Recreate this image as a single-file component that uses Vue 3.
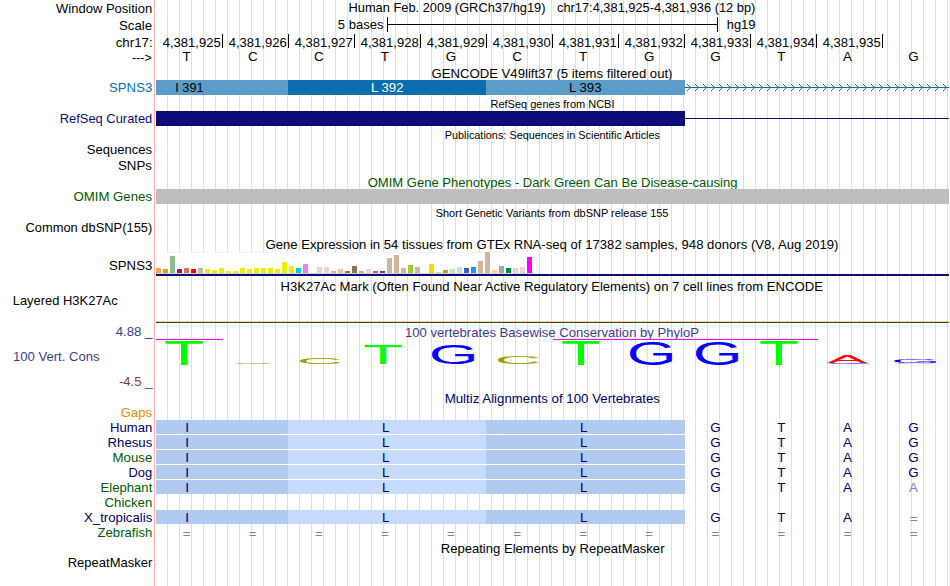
<script setup>
// Every track is its own svg strip, stacked top to bottom.
// The viewBox keeps the strips in one shared browser coordinate system.
const bases = "TCCTGCTGGTAG".split("");
const baseX = (i) => 186.7 + 66.08 * i;

// stretch the glyphs together with the spacing
const fit = (x, end) => ({ x, textLength: end - x, lengthAdjust: "spacingAndGlyphs" });

const ticks = Array.from({ length: 11 }, (_, i) => ({
  x: 222 + 66 * i,
  text: "4,381," + (925 + i),
}));

const arrows = Array.from({ length: 33 }, (_, i) => 687 + 8 * i)
  .map((x) => `M${x} 84h1v1h1v1h1v1h1v1h-1v1h-1v1h-1v1h-1v-1h1v-1h1v-1h1v-1h-1v-1h-1v-1h-1z`)
  .join("");

const codons = [
  { x: 156, width: 132, fill: "#5c9cc8", text: "I 391", from: 175.3, to: 203.5, color: "#000" },
  { x: 288, width: 198, fill: "#0c6eae", text: "L 392", from: 371, to: 403.5, color: "#fff" },
  { x: 486, width: 199, fill: "#5c9cc8", text: "L 393", from: 569, to: 601.5, color: "#000" },
];

// one [color, height] pair per GTEx tissue
const tissues = [
  ["#ffa54f", 5], ["#ee9a00", 4], ["#8fbc8f", 17], ["#8b1c62", 4], ["#ee6a50", 5], ["#ff0000", 4],
  ["#cdb79e", 5], ["#eeee00", 4], ["#eeee00", 3], ["#eeee00", 5], ["#eeee00", 2], ["#eeee00", 2],
  ["#eeee00", 5], ["#eeee00", 4], ["#eeee00", 5], ["#eeee00", 5], ["#eeee00", 5], ["#eeee00", 4],
  ["#eeee00", 11], ["#eeee00", 7], ["#00cdcd", 5], ["#ee82ee", 9], ["#ffffff", 1], ["#eed5d2", 6],
  ["#eed5d2", 6], ["#cdb79e", 2], ["#eec591", 4], ["#8b7355", 2], ["#8b7355", 7], ["#cdaa7d", 2],
  ["#eed5d2", 4], ["#b452cd", 2], ["#7a378b", 2], ["#cdb79e", 15], ["#cdb79e", 18], ["#cdb79e", 5],
  ["#9acd32", 8], ["#cdb79e", 6], ["#ffffff", 1], ["#ffd700", 9], ["#ffb6c1", 1], ["#cd9b1d", 3],
  ["#b4eeb4", 4], ["#d9d9d9", 6], ["#3a5fcd", 5], ["#1e90ff", 6], ["#cdb79e", 12], ["#cdb79e", 21],
  ["#ffd39b", 3], ["#a6a6a6", 7], ["#008b45", 5], ["#eed5d2", 5], ["#eed5d2", 6], ["#ff00ff", 16],
];

// ink boxes of the letters at font-size 100: left, width, descent, height
const ink = {
  T: [2.05, 56.9, 0, 68.8],
  C: [5, 64, 1, 70.8],
  G: [5, 67, 1, 70.8],
  A: [0.2, 66.3, 0, 68.8],
};
const colors = { T: "#00ff00", C: "#a0a000", G: "#0000ff", A: "#ff0000" };
const logo = [
  ["T", 165.3, 202.7, 340.8, 365],
  ["C", 235, 274, 362.2, 363.8],
  ["C", 300, 341, 357, 364],
  ["T", 364.3, 401.7, 345, 364],
  ["G", 432, 475, 345, 364],
  ["C", 498, 539, 356, 364],
  ["T", 562.3, 599.6, 340.8, 365],
  ["G", 630, 673, 341, 365],
  ["G", 696, 739, 341, 365],
  ["T", 760, 797.5, 340.8, 365],
  ["G", 828, 871, 363, 364],
  ["A", 827.3, 867, 355, 363],
  ["A", 894, 934, 363, 364],
  ["G", 894, 937, 359, 363],
].map(([letter, x1, x2, y1, y2]) => {
  const [left, width, descent, height] = ink[letter];
  const sx = (x2 - x1) / width;
  const sy = (y2 - y1) / height;
  return {
    letter,
    fill: colors[letter],
    transform: `translate(${x1 - left * sx} ${y2 - descent * sy}) scale(${sx} ${sy})`,
  };
});

const species = [
  { name: "Human", x: 110, green: false, tail: "GTAG", gap: true },
  { name: "Rhesus", x: 107.5, green: false, tail: "GTAG", gap: true },
  { name: "Mouse", x: 112.5, green: true, tail: "GTAG", gap: true },
  { name: "Dog", x: 128.5, green: false, tail: "GTAG", gap: true },
  { name: "Elephant", x: 100.5, green: true, tail: "GTAa" },
  { name: "Chicken", x: 104.5, green: true, tail: "" },
  { name: "X_tropicalis", x: 84, green: false, tail: "GTA=" },
  { name: "Zebrafish", x: 97.5, green: true, tail: "====", unaligned: true },
];
const isFaint = (c) => c === "=" || c === "a";
</script>

<template>
  <main class="browser">
    <svg height="16" viewBox="0 0 950 16">
      <text v-bind="fit(56, 152.2)" y="13">Window Position</text>
      <text v-bind="fit(348.5, 545.5)" y="12">Human Feb. 2009 (GRCh37/hg19)</text>
      <text v-bind="fit(557, 755.3)" y="12">chr17:4,381,925-4,381,936 (12 bp)</text>
    </svg>

    <svg height="17" viewBox="0 16 950 17">
      <text v-bind="fit(119, 152.2)" y="30">Scale</text>
      <text v-bind="fit(337.8, 383.5)" y="29">5 bases</text>
      <path class="ruler" d="M387.5 17v15M387 24.5h331M717.5 17v15" />
      <text v-bind="fit(726.7, 755.5)" y="29">hg19</text>
    </svg>

    <svg height="16" viewBox="0 33 950 16">
      <text v-bind="fit(115.7, 152.7)" y="47">chr17:</text>
      <template v-for="tick in ticks" :key="tick.x">
        <text v-bind="fit(tick.x - 59.3, tick.x - 1.3)" y="47">{{ tick.text }}</text>
        <rect :x="tick.x" y="34" width="1" height="14" />
      </template>
    </svg>

    <svg height="17" viewBox="0 49 950 17">
      <text v-bind="fit(132, 151.7)" y="62">---&gt;</text>
      <text v-for="(base, i) in bases" :key="i" class="mid" :x="baseX(i)" y="61">{{ base }}</text>
    </svg>

    <svg height="29" viewBox="0 66 950 29">
      <text v-bind="fit(431.5, 672.5)" y="78">GENCODE V49lift37 (5 items filtered out)</text>
      <text class="gencode" v-bind="fit(109, 152.3)" y="92">SPNS3</text>
      <template v-for="codon in codons" :key="codon.x">
        <rect :x="codon.x" y="80" :width="codon.width" height="15" :fill="codon.fill" />
        <text v-bind="fit(codon.from, codon.to)" y="92" :fill="codon.color">{{ codon.text }}</text>
      </template>
      <rect class="gencode" x="685" y="87" width="264" height="1" />
      <path class="arrows" :d="arrows" />
    </svg>

    <svg height="31" viewBox="0 95 950 31">
      <text class="small" v-bind="fit(490.5, 614.5)" y="108">RefSeq genes from NCBI</text>
      <text class="refseq" v-bind="fit(59.7, 152.3)" y="123">RefSeq Curated</text>
      <rect class="refseq" x="156" y="111" width="529" height="15" />
      <rect class="refseq" x="685" y="118" width="264" height="1" />
    </svg>

    <svg height="47" viewBox="0 126 950 47">
      <text class="small" v-bind="fit(444.7, 660)" y="139">Publications: Sequences in Scientific Articles</text>
      <text v-bind="fit(86.7, 152)" y="154">Sequences</text>
      <text v-bind="fit(118, 152)" y="170">SNPs</text>
    </svg>

    <svg height="31" viewBox="0 173 950 31">
      <text class="omim" v-bind="fit(367.7, 737.5)" y="187">OMIM Gene Phenotypes - Dark Green Can Be Disease-causing</text>
      <text class="omim" v-bind="fit(73.5, 152)" y="201">OMIM Genes</text>
      <rect class="omim-bar" x="156" y="189" width="793" height="15" />
    </svg>

    <svg height="32" viewBox="0 204 950 32">
      <text class="small" v-bind="fit(435.7, 668.5)" y="217">Short Genetic Variants from dbSNP release 155</text>
      <text v-bind="fit(25.5, 152.3)" y="232">Common dbSNP(155)</text>
    </svg>

    <svg height="40" viewBox="0 236 950 40">
      <text v-bind="fit(265.5, 838.5)" y="249">Gene Expression in 54 tissues from GTEx RNA-seq of 17382 samples, 948 donors (V8, Aug 2019)</text>
      <text v-bind="fit(109, 152.3)" y="270">SPNS3</text>
      <rect class="gtex-box" x="156.5" y="252.5" width="377" height="21" />
      <rect class="gtex-base" x="156" y="273" width="378" height="1" />
      <rect
        v-for="([color, height], i) in tissues"
        :key="i"
        :x="156 + 7 * i"
        :y="273 - height"
        width="5"
        :height="height"
        :fill="color"
      />
      <rect class="refseq" x="156" y="274" width="793" height="2" />
    </svg>

    <svg height="48" viewBox="0 276 950 48">
      <text v-bind="fit(280.5, 823)" y="291">H3K27Ac Mark (Often Found Near Active Regulatory Elements) on 7 cell lines from ENCODE</text>
      <text v-bind="fit(12.7, 117.7)" y="305">Layered H3K27Ac</text>
      <rect class="mark-top" x="156" y="321" width="793" height="1" />
      <rect class="mark" x="156" y="322" width="793" height="1" />
    </svg>

    <svg height="66" viewBox="0 324 950 66">
      <g class="cons">
        <text v-bind="fit(405, 699)" y="337">100 vertebrates Basewise Conservation by PhyloP</text>
        <text v-bind="fit(115.7, 141.5)" y="336">4.88</text>
        <text x="145" y="336">_</text>
        <text v-bind="fit(13, 99.5)" y="361">100 Vert. Cons</text>
      </g>
      <g class="cons-min">
        <text v-bind="fit(119, 141.5)" y="386">-4.5</text>
        <text x="145" y="386">_</text>
      </g>
      <path class="clipped" d="M156 339.5h67M553 339.5h265" />
      <text
        v-for="(item, i) in logo"
        :key="i"
        class="logo"
        :fill="item.fill"
        :transform="item.transform"
      >{{ item.letter }}</text>
    </svg>

    <svg height="30" viewBox="0 390 950 30">
      <text class="multiz" v-bind="fit(444.7, 660)" y="403">Multiz Alignments of 100 Vertebrates</text>
      <text class="gaps" v-bind="fit(120.7, 152)" y="417">Gaps</text>
    </svg>

    <svg v-for="row in species" :key="row.name" height="15" viewBox="0 0 950 15">
      <text :class="row.green ? 'omim' : 'multiz'" v-bind="fit(row.x, 152.3)" y="12">{{ row.name }}</text>
      <template v-if="row.tail && !row.unaligned">
        <rect v-if="row.gap" class="divider" x="156" y="14" width="529" height="1" />
        <rect class="codon-odd" x="156" y="0" width="132" height="14" />
        <rect class="codon-even" x="288" y="0" width="198" height="14" />
        <rect class="codon-odd" x="486" y="0" width="199" height="14" />
        <text class="multiz mid" x="187" y="12">I</text>
        <text class="multiz mid" x="385.7" y="12">L</text>
        <text class="multiz mid" x="583.7" y="12">L</text>
      </template>
      <template v-if="row.unaligned">
        <text v-for="i in 8" :key="i" class="faint mid" :x="baseX(i - 1)" y="13">=</text>
      </template>
      <text
        v-for="(c, i) in row.tail"
        :key="'t' + i"
        class="mid"
        :class="isFaint(c) ? 'faint' : 'multiz'"
        :x="baseX(8 + i)"
        :y="c === '=' ? 13 : 12"
      >{{ c.toUpperCase() }}</text>
    </svg>

    <svg height="46" viewBox="0 540 950 46">
      <text v-bind="fit(440.7, 664.5)" y="553">Repeating Elements by RepeatMasker</text>
      <text v-bind="fit(67.7, 152.3)" y="567">RepeatMasker</text>
    </svg>
  </main>
</template>

<style>
body {
  background: #fff;
}
</style>

<style scoped>
.browser {
  display: flex;
  flex-direction: column;
  width: 950px;
  height: 586px;
  overflow: hidden;
  /* red label border, then a guide line every 12 pixels */
  background-image: linear-gradient(#ffb0b0, #ffb0b0),
    repeating-linear-gradient(
      to right,
      transparent 0,
      transparent 11px,
      #dcdcf5 11px,
      #dcdcf5 12px
    );
  background-size: 1px 100%, 794px 100%;
  background-position: 154px 0, 156px 0;
  background-repeat: no-repeat;
}

svg {
  display: block;
  flex: none;
  width: 950px;
  overflow: visible;
}

text {
  font-family: "Liberation Sans", Arial, Helvetica, sans-serif;
  font-size: 13.6px;
  white-space: pre;
}

.small {
  font-size: 11.4px;
}

.mid {
  font-size: 13.4px;
  text-anchor: middle;
}

.logo {
  font-size: 100px;
}

.ruler {
  fill: none;
  stroke: #000;
}

.gencode {
  fill: #0c6eae;
}

.arrows {
  fill: #0c6eae;
  shape-rendering: crispEdges;
}

.refseq {
  fill: #0c0c78;
}

.omim {
  fill: #005a00;
}

.omim-bar {
  fill: #bebebe;
}

.gtex-box {
  fill: #fff;
  stroke: #f4f4f6;
}

.gtex-base {
  fill: #d4d4d4;
}

.mark-top {
  fill: #ffc873;
}

.mark {
  fill: #204858;
}

.cons {
  fill: #3c3c8c;
}

.cons-min {
  fill: #8c3c3c;
}

.clipped {
  stroke: #ff00ff;
}

.multiz {
  fill: #000064;
}

.gaps {
  fill: #e68a00;
}

.codon-odd {
  fill: #b0caf0;
}

.codon-even {
  fill: #c6dbff;
}

.divider {
  fill: #fff;
}

.faint {
  fill: #8080b2;
}
</style>
